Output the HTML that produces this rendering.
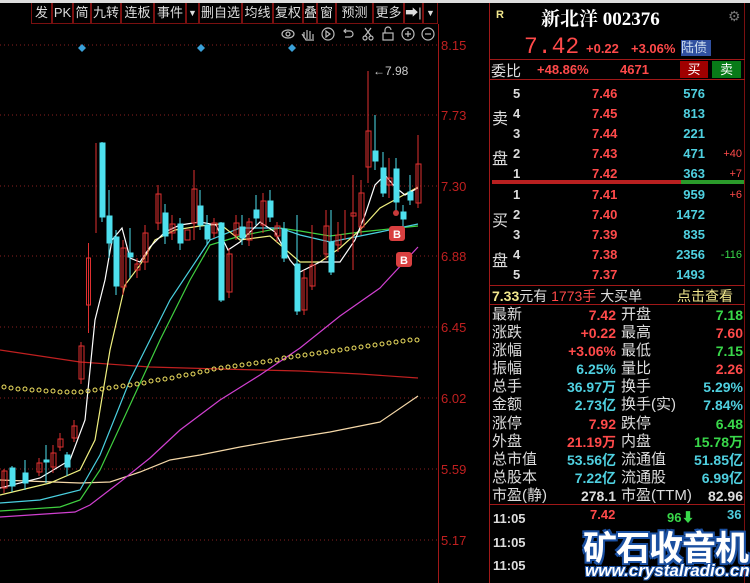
<!DOCTYPE html>
<html><head><meta charset="utf-8"><style>
*{margin:0;padding:0;box-sizing:border-box}
body{width:750px;height:583px;background:#000;overflow:hidden;position:relative;font-family:"Liberation Sans","Noto Sans CJK SC",sans-serif;color:#ddd}
.a{position:absolute;white-space:nowrap}
.tb{position:absolute;top:3px;height:21px;border:1px solid #7a1010;border-top:none;color:#ddd;font-size:13px;line-height:20px;text-align:center}
.r{color:#ff4a4a}.c{color:#4fd0e0}.g{color:#39d84a}.w{color:#ddd}.y{color:#f0e68c}
</style></head><body>
<div class="a" style="left:0;top:0;width:750px;height:3px;background:#ddd"></div>
<div class="tb" style="left:31px;width:21px">发</div>
<div class="tb" style="left:52px;width:21px">PK</div>
<div class="tb" style="left:73px;width:18px">简</div>
<div class="tb" style="left:91px;width:30px">九转</div>
<div class="tb" style="left:121px;width:33px">连板</div>
<div class="tb" style="left:154px;width:32px">事件</div>
<div class="tb" style="left:186px;width:13px;font-size:9px">▼</div>
<div class="tb" style="left:199px;width:43px">删自选</div>
<div class="tb" style="left:242px;width:31px">均线</div>
<div class="tb" style="left:273px;width:30px">复权</div>
<div class="tb" style="left:303px;width:14px">叠</div>
<div class="tb" style="left:317px;width:19px">窗</div>
<div class="tb" style="left:336px;width:37px">预测</div>
<div class="tb" style="left:373px;width:31px">更多</div>
<div class="tb" style="left:404px;width:19px">➡|</div>
<div class="tb" style="left:423px;width:15px;font-size:9px">▼</div>

<svg class="a" style="left:0;top:0" width="490" height="583">
<g stroke="#8a2020" stroke-dasharray="1,3" stroke-width="1">
<line x1="0" y1="45" x2="438" y2="45"/><line x1="0" y1="115" x2="438" y2="115"/><line x1="0" y1="186" x2="438" y2="186"/><line x1="0" y1="256" x2="438" y2="256"/><line x1="0" y1="327" x2="438" y2="327"/><line x1="0" y1="398" x2="438" y2="398"/><line x1="0" y1="469" x2="438" y2="469"/><line x1="0" y1="540" x2="438" y2="540"/>
</g>
<line x1="438.5" y1="24" x2="438.5" y2="583" stroke="#a01818"/>
<g fill="#c02020" font-size="13" font-family="Liberation Sans">
<text x="441" y="50">8.15</text><text x="441" y="120">7.73</text><text x="441" y="191">7.30</text><text x="441" y="261">6.88</text><text x="441" y="332">6.45</text><text x="441" y="403">6.02</text><text x="441" y="474">5.59</text><text x="441" y="545">5.17</text>
</g>
<g fill="#3aa0d8"><path d="M82 44l4 4-4 4-4-4z"/><path d="M201 44l4 4-4 4-4-4z"/><path d="M292 44l4 4-4 4-4-4z"/></g>
<g stroke="#bbb" fill="none" stroke-width="1.2">
<ellipse cx="288" cy="34" rx="6" ry="4"/><circle cx="288" cy="34" r="2"/>
<path d="M304 38v-6m3 7v-9m3 9v-8m3 8v-5M302 34l4 6h8"/>
<circle cx="328" cy="34" r="6"/><path d="M326 31l4 3-4 3z"/>
<path d="M344 31h6a3 3 0 010 6h-5M346 29l-2 2 2 2"/>
<circle cx="365" cy="38" r="2"/><circle cx="371" cy="38" r="2"/><path d="M365 36l6-8M371 36l-6-8"/>
<rect x="383" y="33" width="10" height="7"/><path d="M385 33v-3a3 3 0 016 0"/>
<circle cx="408" cy="34" r="6"/><path d="M405 34h6M408 31v6"/>
<circle cx="428" cy="34" r="6"/><path d="M425 34h6"/>
</g>
<g fill="none" stroke-width="1.2">
<polyline stroke="#c02020" points="0,350 80,362 150,367 220,369 300,371 360,374 418,378"/>
<polyline stroke="#f5d8a8" points="0,480 80,483 110,482 140,472 170,460 200,455 240,447 280,440 330,432 380,422 418,396"/>
<polyline stroke="#d040d0" points="0,517 75,512 90,505 120,482 150,458 180,430 220,400 260,375 300,348 340,316 380,288 418,247"/>
<polyline stroke="#40d040" points="0,511 60,507 80,500 100,470 130,405 160,340 190,280 210,245 240,236 280,228 300,231 330,236 360,232 418,226"/>
<polyline stroke="#4ad0e0" points="0,503 40,500 80,490 100,455 130,380 170,300 210,240 240,228 280,228 300,235 330,242 360,236 380,232 418,224"/>
<polyline stroke="#f0f080" points="0,495 50,483 80,470 95,440 110,350 125,285 140,265 155,240 175,230 200,226 220,224 240,240 270,236 300,262 320,262 340,248 360,230 380,208 400,197 418,187"/>
<polyline stroke="#fff" points="0,488 40,478 70,460 85,420 95,320 105,280 112,240 122,228 130,258 140,262 150,247 165,232 180,225 200,222 216,225 228,250 240,242 260,222 275,232 290,260 300,272 320,262 340,262 355,240 365,215 375,185 385,175 395,187 405,195 418,188"/>
</g>
<g fill="none" stroke="#f0e060" stroke-width="1">
<circle cx="4" cy="387" r="2"/><circle cx="11" cy="388" r="2"/><circle cx="18" cy="389" r="2"/><circle cx="25" cy="389" r="2"/><circle cx="32" cy="390" r="2"/><circle cx="39" cy="390" r="2"/><circle cx="46" cy="391" r="2"/><circle cx="53" cy="391" r="2"/><circle cx="60" cy="392" r="2"/><circle cx="67" cy="392" r="2"/><circle cx="74" cy="392" r="2"/><circle cx="81" cy="392" r="2"/><circle cx="88" cy="391" r="2"/><circle cx="95" cy="390" r="2"/><circle cx="102" cy="389" r="2"/><circle cx="109" cy="388" r="2"/><circle cx="116" cy="387" r="2"/><circle cx="123" cy="386" r="2"/><circle cx="130" cy="385" r="2"/><circle cx="137" cy="384" r="2"/><circle cx="144" cy="383" r="2"/><circle cx="151" cy="381" r="2"/><circle cx="158" cy="380" r="2"/><circle cx="165" cy="379" r="2"/><circle cx="172" cy="378" r="2"/><circle cx="179" cy="376" r="2"/><circle cx="186" cy="375" r="2"/><circle cx="193" cy="374" r="2"/><circle cx="200" cy="372" r="2"/><circle cx="207" cy="371" r="2"/><circle cx="214" cy="369" r="2"/><circle cx="221" cy="368" r="2"/><circle cx="228" cy="367" r="2"/><circle cx="235" cy="366" r="2"/><circle cx="242" cy="365" r="2"/><circle cx="249" cy="364" r="2"/><circle cx="256" cy="363" r="2"/><circle cx="263" cy="362" r="2"/><circle cx="270" cy="361" r="2"/><circle cx="277" cy="360" r="2"/><circle cx="284" cy="358" r="2"/><circle cx="291" cy="357" r="2"/><circle cx="298" cy="356" r="2"/><circle cx="305" cy="355" r="2"/><circle cx="312" cy="354" r="2"/><circle cx="319" cy="353" r="2"/><circle cx="326" cy="352" r="2"/><circle cx="333" cy="351" r="2"/><circle cx="340" cy="350" r="2"/><circle cx="347" cy="349" r="2"/><circle cx="354" cy="348" r="2"/><circle cx="361" cy="347" r="2"/><circle cx="368" cy="346" r="2"/><circle cx="375" cy="345" r="2"/><circle cx="382" cy="344" r="2"/><circle cx="389" cy="343" r="2"/><circle cx="396" cy="342" r="2"/><circle cx="403" cy="341" r="2"/><circle cx="410" cy="340" r="2"/><circle cx="417" cy="340" r="2"/>
</g>
<g stroke="#e03030" fill="none" stroke-width="1">
<path d="M4 469v24M39 458v18M53 445v28M60 433v18M74 420v22M81 342v42M88.5 243v90M96 143v90M123 240v55M137 258v20M145 225v45M158 185v45M172 215v25M194 170v70M214 218v20M229 248v50M236 215v25M249 218v28M263 193v40M277 222v20M304 270v45M312 225v65M326 210v50M338 222v30M345 210v30M353 175v95M361 180v55M368 71v112M389 158v40M418 135v73"/>
<rect x="2" y="471" width="5" height="17"/><rect x="37" y="463" width="5" height="9"/><rect x="51" y="453" width="5" height="14"/><rect x="58" y="439" width="5" height="8"/><rect x="72" y="426" width="5" height="12"/><rect x="79" y="346" width="5" height="33"/>
<rect x="86.5" y="258" width="4" height="47"/><rect x="121" y="248" width="5" height="39"/><rect x="135" y="264" width="5" height="6"/><rect x="143" y="233" width="5" height="29"/><rect x="156" y="194" width="5" height="29"/><rect x="170" y="224" width="5" height="9"/><rect x="185" y="230" width="5" height="10"/><rect x="192" y="189" width="5" height="34"/><rect x="212" y="223" width="5" height="10"/><rect x="227" y="254" width="5" height="38"/><rect x="234" y="223" width="5" height="12"/><rect x="247" y="222" width="5" height="18"/><rect x="261" y="201" width="5" height="24"/><rect x="275" y="226" width="5" height="10"/><rect x="302" y="278" width="5" height="32"/><rect x="310" y="265" width="5" height="21"/><rect x="324" y="226" width="5" height="28"/><rect x="336" y="235" width="5" height="10"/><rect x="351" y="213" width="5" height="3"/><rect x="359" y="193" width="5" height="34"/><rect x="366" y="131" width="5" height="36"/><rect x="387" y="178" width="5" height="7"/><rect x="416" y="164" width="5" height="39"/>
</g>
<text x="373" y="75" fill="#ccc" font-size="12" font-family="Liberation Sans">←7.98</text>
<g fill="#4ee0ee" stroke="#4ee0ee">
<path d="M12 466v26M25 460v30M46 445v38M67 452v24M102 142v80M109 190v68M116 230v65M130 228v50M165 204v40M180 218v32M200 190v40M207 215v30M221 222v80M242 215v30M256 195v30M270 190v32M284 222v40M297 215v100M331 210v65M375 115v55M383 152v45M396 158v55M403 205v30M410 175v30"/>
<rect x="10" y="468" width="5" height="18"/><rect x="23" y="473" width="5" height="10"/><rect x="44" y="460" width="5" height="2"/><rect x="65" y="455" width="5" height="12"/>
<rect x="100" y="143" width="5" height="74"/><rect x="107" y="216" width="5" height="27"/><rect x="114" y="237" width="5" height="49"/><rect x="128" y="253" width="5" height="4"/><rect x="163" y="213" width="5" height="23"/><rect x="178" y="224" width="5" height="19"/><rect x="198" y="206" width="5" height="19"/><rect x="205" y="225" width="5" height="14"/><rect x="219" y="223" width="5" height="77"/><rect x="240" y="227" width="5" height="11"/><rect x="254" y="210" width="5" height="8"/><rect x="268" y="201" width="5" height="16"/><rect x="282" y="229" width="5" height="29"/><rect x="295" y="264" width="5" height="47"/><rect x="329" y="242" width="5" height="30"/><rect x="373" y="151" width="5" height="10"/><rect x="381" y="168" width="5" height="25"/><rect x="394" y="169" width="5" height="33"/><rect x="401" y="212" width="5" height="7"/><rect x="408" y="192" width="5" height="8"/>
</g>
<circle cx="396" cy="213" r="3" fill="#c83a3a"/>
<rect x="389" y="226" width="16" height="15" rx="3" fill="#d94040"/><text x="393" y="238" fill="#fff" font-size="11" font-weight="bold">B</text>
<rect x="396" y="252" width="16" height="15" rx="3" fill="#d94040"/><text x="400" y="264" fill="#fff" font-size="11" font-weight="bold">B</text>
</svg>

<div class="a" style="left:489px;top:3px;width:1px;height:580px;background:#a01818"></div>
<div class="a" style="left:744px;top:3px;width:1px;height:580px;background:#7a1010"></div>
<div class="a y" style="left:496px;top:9px;font-size:11px;font-weight:bold">R</div>
<div class="a" style="left:541px;top:4px;font-size:19px;font-weight:bold;color:#fff;font-family:'Liberation Serif','Noto Serif CJK SC',serif">新北洋 002376</div>
<div class="a" style="left:728px;top:8px;font-size:14px;color:#777">⚙</div>
<div class="a r" style="left:524px;top:34px;font-size:23px;font-family:'Liberation Mono',monospace">7.42</div>
<div class="a r" style="left:586px;top:41px;font-size:13px;font-weight:bold">+0.22</div>
<div class="a r" style="left:631px;top:41px;font-size:13px;font-weight:bold">+3.06%</div>
<div class="a" style="left:681px;top:40px;width:30px;height:16px;background:#3050a0;color:#cde;font-size:13px;line-height:16px">陆债</div>
<div class="a" style="left:490px;top:59px;width:255px;height:1px;background:#a01818"></div>
<div class="a w" style="left:491px;top:60px;font-size:15px">委比</div>
<div class="a r" style="left:537px;top:62px;font-size:13px;font-weight:bold">+48.86%</div>
<div class="a r" style="left:620px;top:62px;font-size:13px;font-weight:bold">4671</div>
<div class="a" style="left:680px;top:61px;width:28px;height:17px;background:#a00000;color:#fff;font-size:13px;text-align:center;line-height:17px">买</div>
<div class="a" style="left:712px;top:61px;width:29px;height:17px;background:#087a18;color:#fff;font-size:13px;text-align:center;line-height:17px">卖</div>
<div class="a" style="left:490px;top:79px;width:255px;height:1px;background:#a01818"></div>
<div class="a w" style="left:492px;top:100px;font-size:16px;line-height:40px">卖<br>盘</div>
<div class="a w" style="left:492px;top:202px;font-size:16px;line-height:40px">买<br>盘</div>
<div class="a" style="left:492px;top:180px;width:189px;height:4px;background:#b82020"></div>
<div class="a" style="left:681px;top:180px;width:63px;height:4px;background:#2a9a2a"></div>
<div style="position:absolute;left:0;top:0;font-size:13px;font-weight:bold">
<div class="a w" style="left:513px;top:84px;line-height:20px">5<br>4<br>3<br>2<br>1</div>
<div class="a r" style="left:592px;top:84px;line-height:20px">7.46<br>7.45<br>7.44<br>7.43<br>7.42</div>
<div class="a c" style="left:660px;top:84px;width:45px;text-align:right;line-height:20px">576<br>813<br>221<br>471<br>363</div>
<div class="a r" style="left:710px;top:84px;width:32px;text-align:right;line-height:20px;font-weight:normal;font-size:11px">&nbsp;<br>&nbsp;<br>&nbsp;<br>+40<br>+7</div>
<div class="a w" style="left:513px;top:185px;line-height:20px">1<br>2<br>3<br>4<br>5</div>
<div class="a r" style="left:592px;top:185px;line-height:20px">7.41<br>7.40<br>7.39<br>7.38<br>7.37</div>
<div class="a c" style="left:660px;top:185px;width:45px;text-align:right;line-height:20px">959<br>1472<br>835<br>2356<br>1493</div>
<div class="a" style="left:710px;top:185px;width:32px;text-align:right;line-height:20px;font-weight:normal;font-size:11px"><span class="r">+6</span><br>&nbsp;<br>&nbsp;<br><span class="g">-116</span><br>&nbsp;</div>
</div>
<div class="a" style="left:490px;top:285px;width:255px;height:1px;background:#a01818"></div>
<div class="a" style="left:492px;top:286px;font-size:14px"><span class="y" style="font-weight:bold">7.33</span><span class="w">元有</span> <span class="r">1773手</span> <span class="w">大买单</span></div>
<div class="a y" style="left:677px;top:286px;font-size:14px">点击查看</div>
<div class="a" style="left:490px;top:304px;width:255px;height:1px;background:#a01818"></div>
<div class="a w" style="left:492px;top:306px;font-size:15px;line-height:18.1px">最新<br>涨跌<br>涨幅<br>振幅<br>总手<br>金额<br>涨停<br>外盘<br>总市值<br>总股本<br>市盈(静)</div>
<div class="a" style="left:530px;top:306px;width:86px;text-align:right;font-size:14px;font-weight:bold;line-height:18.1px"><span class="r">7.42</span><br><span class="r">+0.22</span><br><span class="r">+3.06%</span><br><span class="c">6.25%</span><br><span class="c">36.97万</span><br><span class="c">2.73亿</span><br><span class="r">7.92</span><br><span class="r">21.19万</span><br><span class="c">53.56亿</span><br><span class="c">7.22亿</span><br><span class="w">278.1</span></div>
<div class="a w" style="left:621px;top:306px;font-size:15px;line-height:18.1px">开盘<br>最高<br>最低<br>量比<br>换手<br>换手(实)<br>跌停<br>内盘<br>流通值<br>流通股<br>市盈(TTM)</div>
<div class="a" style="left:680px;top:306px;width:63px;text-align:right;font-size:14px;font-weight:bold;line-height:18.1px"><span class="g">7.18</span><br><span class="r">7.60</span><br><span class="g">7.15</span><br><span class="r">2.26</span><br><span class="c">5.29%</span><br><span class="c">7.84%</span><br><span class="g">6.48</span><br><span class="g">15.78万</span><br><span class="c">51.85亿</span><br><span class="c">6.99亿</span><br><span class="w">82.96</span></div>
<div class="a" style="left:490px;top:504px;width:255px;height:1px;background:#a01818"></div>
<div class="a w" style="left:493px;top:507px;font-size:13px;font-weight:bold;line-height:23.5px">11:05<br>11:05<br>11:05</div>
<div class="a r" style="left:590px;top:507px;font-size:13px;font-weight:bold">7.42</div>
<div class="a g" style="left:667px;top:507px;font-size:13px;font-weight:bold">96⬇</div>
<div class="a c" style="left:727px;top:507px;font-size:13px;font-weight:bold">36</div>
<div class="a" style="left:583px;top:521px;font-size:34px;font-weight:bold;color:#fff;letter-spacing:-1px;text-shadow:-2px -2px 0 #1a4fa0,2px -2px 0 #1a4fa0,-2px 2px 0 #1a4fa0,2px 2px 0 #1a4fa0,0 2px 0 #1a4fa0,2px 0 0 #1a4fa0">矿石收音机</div>
<div class="a" style="left:585px;top:561px;font-size:17px;font-weight:bold;font-style:italic;color:#fff;text-shadow:-1px -1px 0 #1a4fa0,1px -1px 0 #1a4fa0,-1px 1px 0 #1a4fa0,1px 1px 0 #1a4fa0">www.crystalradio.cn</div>
</body></html>
